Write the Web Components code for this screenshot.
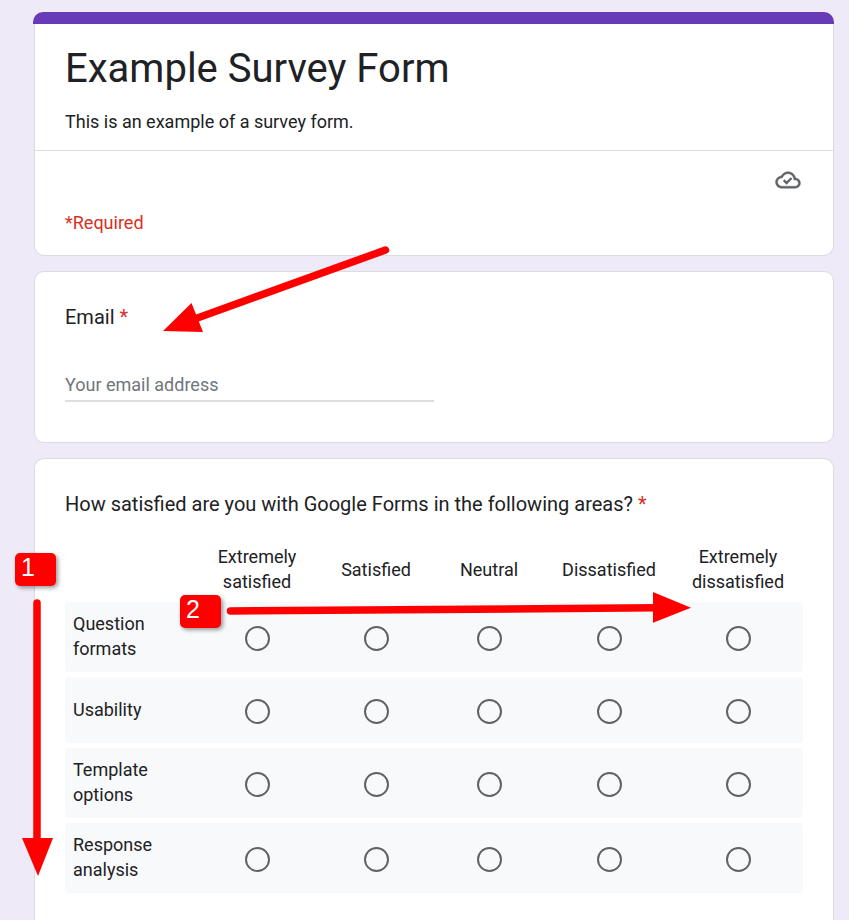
<!DOCTYPE html>
<html lang="en">
<head>
<meta charset="utf-8">
<meta name="viewport" content="width=device-width, initial-scale=1">
<title>Example Survey Form</title>
<style>
  :root {
    --ink: #202124;
    --line: #dadce0;
    --accent: #673ab7;
    --required: #d93025;
    --mark: #ff0000;
  }
  body {
    margin: 0;
    background: #eeeaf8;
    color: var(--ink);
    font: 18px/25px Roboto, sans-serif;
  }
</style>
</head>
<body>
<survey-page>
  <survey-header heading="Example Survey Form" description="This is an example of a survey form.">*Required</survey-header>
  <form-card><text-question label="Email" placeholder="Your email address"></text-question></form-card>
  <form-card continues>
    <grid-question label="How satisfied are you with Google Forms in the following areas?"
      columns="Extremely satisfied|Satisfied|Neutral|Dissatisfied|Extremely dissatisfied"
      rows="Question formats|Usability|Template options|Response analysis"></grid-question>
  </form-card>
  <callout-layer slot="overlay">
    <step-badge style="left:15px;top:553px">1</step-badge>
    <step-badge style="left:180px;top:595px">2</step-badge>
  </callout-layer>
</survey-page>

<script>
class Base extends HTMLElement {
  connectedCallback() {
    if (!this.shadowRoot) this.attachShadow({ mode: 'open' }).innerHTML = this.render();
  }
}

customElements.define('survey-page', class extends Base {
  render() {
    return `<style>
      :host { display: block; position: relative; }
      main {
        box-sizing: border-box; min-height: 100vh;
        display: flex; flex-direction: column; gap: 15px;
        padding: 12px 15px 0 34px;
      }
    </style><main><slot></slot></main><slot name="overlay"></slot>`;
  }
});

customElements.define('form-card', class extends Base {
  render() {
    return `<style>
      :host {
        display: block; box-sizing: border-box; padding: 32px 30px 40px;
        background: #fff; border: 1px solid var(--line); border-radius: 10px;
      }
      :host([continues]) {
        flex: 1; padding-bottom: 20px;
        border-bottom: 0; border-radius: 10px 10px 0 0;
      }
    </style><slot></slot>`;
  }
});

customElements.define('survey-header', class extends Base {
  render() {
    return `<style>
      :host { display: block; }
      .strip { height: 12px; margin-left: -1px; background: var(--accent); border-radius: 10px 10px 0 0; }
      .card { background: #fff; border: 1px solid var(--line); border-top: 0; border-radius: 0 0 10px 10px; }
      .intro { padding: 20px 30px 16px; border-bottom: 1px solid var(--line); }
      h1 { margin: 0; font-size: 40px; line-height: 50px; font-weight: 400; }
      p { margin: 15px 0 0; }
      .status { display: flex; flex-direction: column; padding: 16px 32px 20px 30px; gap: 17px; }
      svg { width: 26px; height: 26px; align-self: flex-end; }
      .required { color: var(--required); }
    </style>
    <div class="strip"></div>
    <div class="card">
      <div class="intro"><h1>${this.getAttribute('heading')}</h1><p>${this.getAttribute('description')}</p></div>
      <div class="status">
        <svg viewBox="-0.5 -0.500 25 25" role="img" aria-label="Draft saved">
          <path fill="#5f6368" stroke="#5f6368" stroke-width="0.4" d="M19.35 10.04C18.67 6.59 15.64 4 12 4 9.11 4 6.6 5.64 5.35 8.04 2.34 8.36 0 10.91 0 14c0 3.31 2.69 6 6 6h13c2.76 0 5-2.24 5-5 0-2.64-2.05-4.78-4.65-4.96zM19 18H6c-2.21 0-4-1.79-4-4 0-2.05 1.53-3.76 3.56-3.97l1.07-.11.5-.95C8.08 7.14 9.94 6 12 6c2.62 0 4.88 1.86 5.39 4.43l.3 1.5 1.53.11c1.56.1 2.78 1.41 2.78 2.96 0 1.65-1.35 3-3 3z"/>
          <path fill="none" stroke="#5f6368" stroke-width="2.3" d="M7.900 12.200l2.700 2.700 4.800-4.800"/>
        </svg>
        <div class="required"><slot></slot></div>
      </div>
    </div>`;
  }
});

customElements.define('text-question', class extends Base {
  render() {
    return `<style>
      :host { display: block; }
      label { display: block; font-size: 20px; line-height: 26px; }
      label span { color: var(--required); }
      input {
        display: block; box-sizing: border-box; width: 50%; margin-top: 40px; padding: 0 0 2px;
        border: 0; border-bottom: 2px solid #dedede; outline: 0; background: none;
        color: inherit; font: inherit; height: 32px;
      }
      input::placeholder { color: #70757a; opacity: 1; }
    </style>
    <label for="field">${this.getAttribute('label')} <span>*</span></label>
    <input id="field" type="email" required placeholder="${this.getAttribute('placeholder')}">`;
  }
});

customElements.define('grid-question', class extends Base {
  render() {
    const columns = this.getAttribute('columns').split('|');
    const rows = this.getAttribute('rows').split('|');
    return `<style>
      :host { display: block; }
      h2 { margin: 0 0 22px; font-size: 20px; line-height: 26px; font-weight: 400; }
      h2 span { color: var(--required); }
      table { width: 100%; table-layout: fixed; border-collapse: separate; border-spacing: 0 5px; }
      col:nth-child(1) { width: 130px; }
      col:nth-child(2) { width: 124px; }
      col:nth-child(3) { width: 114px; }
      col:nth-child(4) { width: 112px; }
      col:nth-child(5) { width: 128px; }
      col:nth-child(6) { width: 130px; }
      th, td { font-weight: 400; padding: 0; text-align: center; vertical-align: middle; }
      thead :is(th, td) { padding-bottom: 3px; }
      tbody :is(th, td) { background: #f8f9fa; box-sizing: border-box; height: 66px; }
      tbody th { text-align: left; padding: 0 8px 2px; }
      tbody tr:not(:nth-child(2)) :is(th, td) { height: 70px; }
      tbody :is(th, td):first-child { border-radius: 4px 0 0 4px; }
      tbody :is(th, td):last-child { border-radius: 0 4px 4px 0; }
      input {
        appearance: none; display: block; box-sizing: border-box;
        width: 25px; height: 25px; margin: 2px auto 0;
        border: 2px solid #5f6368; border-radius: 50%;
      }
      input:checked { border-color: var(--accent); background: radial-gradient(var(--accent) 45%, #0000 50%); }
    </style>
    <h2 id="q">${this.getAttribute('label')} <span>*</span></h2>
    <table aria-labelledby="q">
      <colgroup>${'<col>'.repeat(columns.length + 1)}</colgroup>
      <thead><tr><td></td>${columns.map(c => `<th scope="col">${c}</th>`).join('')}</tr></thead>
      <tbody>${rows.map((r, i) => `<tr><th scope="row">${r}</th>${columns.map(c =>
        `<td><input type="radio" name="row${i}" value="${c}" aria-label="${r}: ${c}"></td>`).join('')}</tr>`).join('')}</tbody>
    </table>`;
  }
});

/* Tutorial arrows and numbered markers floating over the form. */
customElements.define('callout-layer', class extends Base {
  render() {
    return `<style>
      :host { position: absolute; inset: 0; overflow: hidden; pointer-events: none; }
      svg { position: absolute; left: 0; top: 0; overflow: visible; }
    </style>
    <svg width="849" height="920" viewBox="0 0 849 920" fill="#f00" stroke-linecap="round" aria-hidden="true">
      <path stroke="#f00" stroke-width="7.5" d="M385.5 250L196 318.5M37 603V842M230.500 611L656 607.800"/>
      <path d="M163 331L191.500 303L203 332zM22 838H53L38 876zM653 592V622.800L691 607.800z"/>
    </svg>
    <slot></slot>`;
  }
});

customElements.define('step-badge', class extends Base {
  render() {
    return `<style>
      :host {
        position: absolute; box-sizing: border-box; width: 41px; height: 33px; padding-left: 6px;
        background: var(--mark); border-radius: 5px; box-shadow: 2px 2px 4px #0006;
        color: #fff; font: 25px/29px "Liberation Sans", sans-serif;
      }
    </style><slot></slot>`;
  }
});
</script>
</body>
</html>
